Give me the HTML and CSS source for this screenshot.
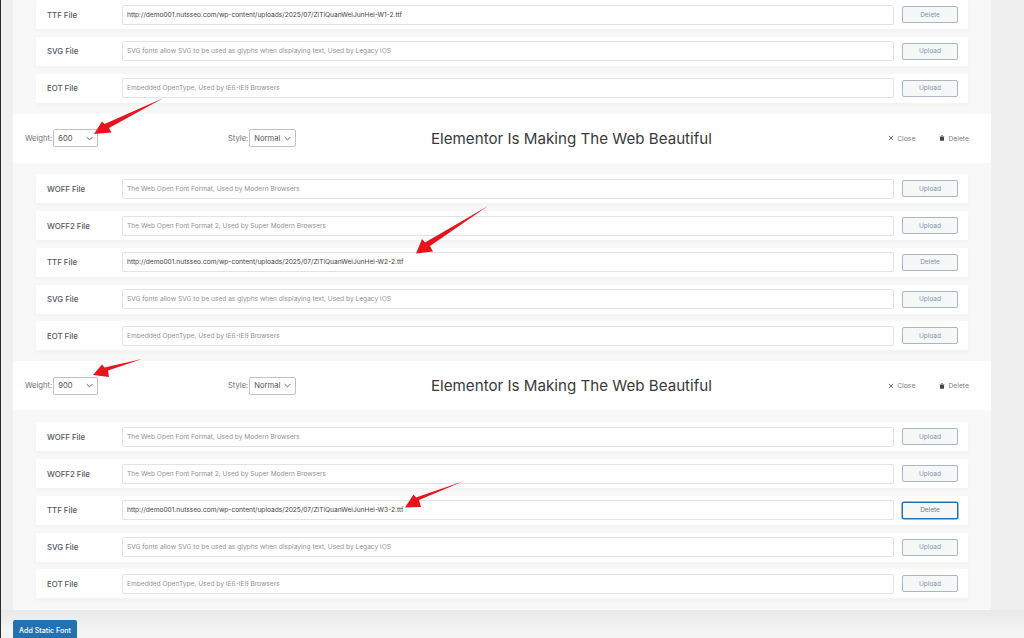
FILE: index.html
```html
<!DOCTYPE html>
<html lang="en">
<head>
<meta charset="UTF-8">
<title>Custom Fonts</title>
<link rel="stylesheet" href="styles.css">
</head>
<body>
<div class="screen">
  <main class="panel">
    <section class="files files-first">
      <div class="row"><label>TTF File</label><input class="field" type="text" value="http://demo001.nutsseo.com/wp-content/uploads/2025/07/ZiTiQuanWeiJunHei-W1-2.ttf"><button class="btn">Delete</button></div>
      <div class="row"><label>SVG File</label><input class="field" type="text" placeholder="SVG fonts allow SVG to be used as glyphs when displaying text, Used by Legacy iOS"><button class="btn">Upload</button></div>
      <div class="row"><label>EOT File</label><input class="field" type="text" placeholder="Embedded OpenType, Used by IE6-IE9 Browsers"><button class="btn">Upload</button></div>
    </section>

    <header class="variant">
      <div class="pick pick-weight"><span>Weight:</span><div class="select select-weight">600<svg viewBox="0 0 10 6"><path d="M1 1l4 4 4-4"/></svg></div></div>
      <div class="pick pick-style"><span>Style:</span><div class="select select-style">Normal<svg viewBox="0 0 10 6"><path d="M1 1l4 4 4-4"/></svg></div></div>
      <h2 class="preview">Elementor Is Making The Web Beautiful</h2>
      <div class="actions">
        <a class="action action-close"><svg viewBox="0 0 10 10"><path d="M1.500 1.500l7 7M8.500 1.500l-7 7"/></svg>Close</a>
        <a class="action"><svg class="bin" viewBox="0 0 10 10"><path d="M1 1.500h2.500l.5-1h2l.5 1h2.500v1.200h-8zM1.700 3.400h6.600v6.100h-6.600z"/></svg>Delete</a>
      </div>
    </header>
    <section class="files">
      <div class="row"><label>WOFF File</label><input class="field" type="text" placeholder="The Web Open Font Format, Used by Modern Browsers"><button class="btn">Upload</button></div>
      <div class="row"><label>WOFF2 File</label><input class="field" type="text" placeholder="The Web Open Font Format 2, Used by Super Modern Browsers"><button class="btn">Upload</button></div>
      <div class="row"><label>TTF File</label><input class="field" type="text" value="http://demo001.nutsseo.com/wp-content/uploads/2025/07/ZiTiQuanWeiJunHei-W2-2.ttf"><button class="btn">Delete</button></div>
      <div class="row"><label>SVG File</label><input class="field" type="text" placeholder="SVG fonts allow SVG to be used as glyphs when displaying text, Used by Legacy iOS"><button class="btn">Upload</button></div>
      <div class="row"><label>EOT File</label><input class="field" type="text" placeholder="Embedded OpenType, Used by IE6-IE9 Browsers"><button class="btn">Upload</button></div>
    </section>

    <header class="variant">
      <div class="pick pick-weight"><span>Weight:</span><div class="select select-weight">900<svg viewBox="0 0 10 6"><path d="M1 1l4 4 4-4"/></svg></div></div>
      <div class="pick pick-style"><span>Style:</span><div class="select select-style">Normal<svg viewBox="0 0 10 6"><path d="M1 1l4 4 4-4"/></svg></div></div>
      <h2 class="preview">Elementor Is Making The Web Beautiful</h2>
      <div class="actions">
        <a class="action action-close"><svg viewBox="0 0 10 10"><path d="M1.500 1.500l7 7M8.500 1.500l-7 7"/></svg>Close</a>
        <a class="action"><svg class="bin" viewBox="0 0 10 10"><path d="M1 1.500h2.500l.5-1h2l.5 1h2.500v1.200h-8zM1.700 3.400h6.600v6.100h-6.600z"/></svg>Delete</a>
      </div>
    </header>
    <section class="files">
      <div class="row"><label>WOFF File</label><input class="field" type="text" placeholder="The Web Open Font Format, Used by Modern Browsers"><button class="btn">Upload</button></div>
      <div class="row"><label>WOFF2 File</label><input class="field" type="text" placeholder="The Web Open Font Format 2, Used by Super Modern Browsers"><button class="btn">Upload</button></div>
      <div class="row"><label>TTF File</label><input class="field" type="text" value="http://demo001.nutsseo.com/wp-content/uploads/2025/07/ZiTiQuanWeiJunHei-W3-2.ttf"><button class="btn btn-focus">Delete</button></div>
      <div class="row"><label>SVG File</label><input class="field" type="text" placeholder="SVG fonts allow SVG to be used as glyphs when displaying text, Used by Legacy iOS"><button class="btn">Upload</button></div>
      <div class="row"><label>EOT File</label><input class="field" type="text" placeholder="Embedded OpenType, Used by IE6-IE9 Browsers"><button class="btn">Upload</button></div>
    </section>
  </main>

  <footer class="bottom">
    <button class="add">Add Static Font</button>
  </footer>

  <!-- red annotation arrows drawn on top of the screenshot -->
  <svg class="arrows" viewBox="0 0 1024 638">
    <path d="M163.500 98L109 128L111.500 132.500L94 134L102 121.500L104.500 124Z"/>
    <path d="M488 206L430 246L433 251.500L416 253.500L422 239L425 242.500Z"/>
    <path d="M142 359L108 370.500L109 377L93 375L102 364.500L104.500 367.500Z"/>
    <path d="M464 481L419 500L421 507L405 507.500L413.500 494.500L416 497.500Z"/>
  </svg>
</div>
</body>
</html>
```

FILE: styles.css
```css
:root{
    --page:#f0f0f1;
    --panel:#f8f8f8;
    --line:#e2e3e6;
    --text:#3c434a;
    --muted:#8f9397;
    --brand:#2271b1;
}
*{box-sizing:border-box;margin:0;padding:0;}
html,body{
    height:100%;
    overflow:hidden;
}
body{
    font-family:'Inter',sans-serif;
    background:var(--page);
    color:var(--text);
}
.screen{
    position:relative;
    width:1024px;
    height:638px;
    overflow:hidden;
    border-left:1px solid #2c2c2e;
    display:flex;
    flex-direction:column;
}
.panel{
    width:978px;
    height:610px;
    margin-left:12px;
    background:var(--panel);
    flex:none;
}

/* file rows */
.files{
    padding:11.800px 23px 11px;
    display:flex;
    flex-direction:column;
    gap:7.800px;
}
.files-first{
    padding:0 23px;
    height:113.500px;
}
.row{
    height:29px;
    background:#fff;
    display:flex;
    align-items:center;
    padding:0 10px 0 11px;
    box-shadow:0 2px 5px rgba(0,0,0,.03);
}
.row label{
    width:75px;
    flex:none;
    font-size:7.800px;
    font-weight:500;
    color:#50575e;
}
.field{
    width:772px;
    height:20px;
    flex:none;
    border:1px solid var(--line);
    border-radius:2px;
    background:#fff;
    padding:0 4px;
    font-family:inherit;
    font-size:6.620px;
    color:#444;
    outline:none;
}
.field::placeholder{
    color:var(--muted);
    opacity:1;
}
.btn{
    width:56px;
    height:17px;
    flex:none;
    margin-left:8px;
    background:#f6f7f7;
    border:1px solid #a9b6c4;
    border-radius:2px;
    font-family:inherit;
    font-size:6.500px;
    color:#7a95b2;
}
.btn-focus{
    border-color:#2271b1;
    box-shadow:0 0 0 .5px #2271b1;
    color:#6a7b8c;
}

/* weight / style header */
.variant{
    position:relative;
    height:49px;
    background:#fff;
    display:flex;
    align-items:center;
    padding:0 22px 0 12px;
}
.pick{
    display:flex;
    align-items:center;
    gap:1px;
    font-size:7.600px;
    color:#6e7378;
}
.pick-weight{
    width:203px;
}
.pick-style{
    flex:none;
}
.select{
    height:18px;
    border:1px solid #c0c3c6;
    border-radius:2px;
    background:#fff;
    display:flex;
    align-items:center;
    justify-content:space-between;
    padding:0 4px;
    font-size:7.600px;
    color:#555;
}
.select svg{
    width:7px;
    height:5px;
    fill:none;
    stroke:#50575e;
    stroke-width:1.300;
}
.select-weight{
    width:45px;
}
.select-style{
    width:47px;
}
.preview{
    position:absolute;
    left:418px;
    top:15px;
    font-size:15.150px;
    line-height:20px;
    font-weight:400;
    color:#3a3a3a;
    white-space:nowrap;
}
.actions{
    margin-left:auto;
    display:flex;
    gap:24px;
}
.action{
    display:flex;
    align-items:center;
    gap:3px;
    font-size:6.800px;
    color:#7d7d7d;
}
.action svg{
    width:6px;
    height:6px;
    fill:none;
    stroke:#444;
    stroke-width:1.300;
}
.action .bin{
    fill:#444;
    stroke:none;
}

/* sticky bottom bar */
.bottom{
    flex:1;
    padding:10px 0 0 12px;
    background:linear-gradient(#e9e9ea,#f3f3f3 60%);
}
.add{
    display:block;
    width:64px;
    height:20px;
    background:var(--brand);
    border:0;
    border-radius:2px;
    font-family:inherit;
    font-size:7.100px;
    font-weight:500;
    color:#fff;
}
.arrows{
    position:absolute;
    left:-1px;
    top:0;
    width:1024px;
    height:638px;
    fill:#e8141c;
    pointer-events:none;
}
```
